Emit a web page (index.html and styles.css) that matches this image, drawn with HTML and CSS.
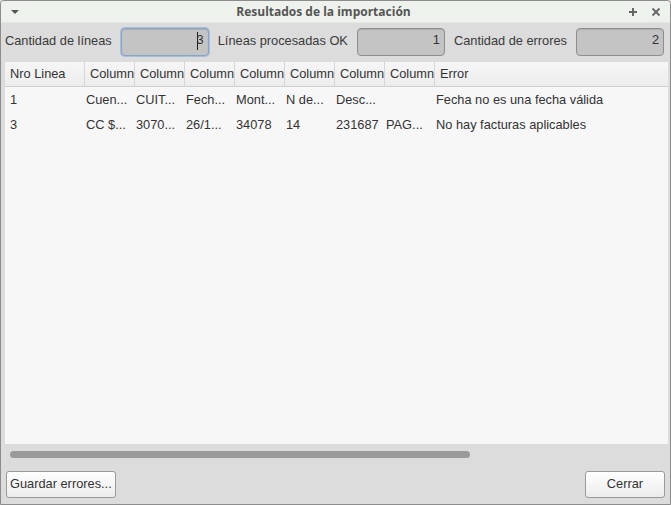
FILE: index.html
```html
<!DOCTYPE html>
<html>
<head>
<meta charset="utf-8">
<link rel="stylesheet" href="styles.css">
</head>
<body>
<div class="window">
  <div class="titlebar">
    <svg class="menu-icon" width="10" height="6" viewBox="0 0 10 6"><path d="M1 1 L9 1 L5 5 Z" fill="#555"/></svg>
    <div class="title">Resultados de la importación</div>
    <div class="tb-buttons">
      <svg width="10" height="10" viewBox="0 0 10 10"><path d="M5 1 V9 M1 5 H9" stroke="#666" stroke-width="2"/></svg>
      <svg width="10" height="10" viewBox="0 0 10 10"><path d="M1.5 1.5 L8.5 8.5 M8.5 1.5 L1.5 8.5" stroke="#666" stroke-width="1.8"/></svg>
    </div>
  </div>
  <div class="content">
    <div class="fields">
      <span class="label first">Cantidad de líneas</span>
      <div class="input focus"><span class="caret"></span>3</div>
      <span class="label">Líneas procesadas OK</span>
      <div class="input">1</div>
      <span class="label">Cantidad de errores</span>
      <div class="input">2</div>
    </div>
    <div class="table">
      <div class="row header">
        <div class="c c0">Nro Linea</div>
        <div class="c c1">Column</div>
        <div class="c c1">Column</div>
        <div class="c c1">Column</div>
        <div class="c c1">Column</div>
        <div class="c c1">Column</div>
        <div class="c c1">Column</div>
        <div class="c c1">Column</div>
        <div class="c cl">Error</div>
      </div>
      <div class="row">
        <div class="c c0">1</div>
        <div class="c c1">Cuen...</div>
        <div class="c c1">CUIT...</div>
        <div class="c c1">Fech...</div>
        <div class="c c1">Mont...</div>
        <div class="c c1">N de...</div>
        <div class="c c1">Desc...</div>
        <div class="c c1"></div>
        <div class="c cl">Fecha no es una fecha válida</div>
      </div>
      <div class="row">
        <div class="c c0">3</div>
        <div class="c c1">CC $...</div>
        <div class="c c1">3070...</div>
        <div class="c c1">26/1...</div>
        <div class="c c1">34078</div>
        <div class="c c1">14</div>
        <div class="c c1">231687</div>
        <div class="c c1">PAG...</div>
        <div class="c cl">No hay facturas aplicables</div>
      </div>
    </div>
    <div class="scroll"><div class="thumb"></div></div>
    <div class="buttons">
      <div class="btn">Guardar errores...</div>
      <div class="btn cerrar">Cerrar</div>
    </div>
  </div>
</div>
</body>
</html>
```
FILE: styles.css
```css
html, body {
  margin: 0;
  padding: 0;
  background: #dcdcdc;
}
.window {
  width: 671px;
  height: 505px;
  box-sizing: border-box;
  border: 1px solid #8c8c8c;
  border-radius: 4px 4px 0 0;
  background: #dcdcdc;
  font-family: "Liberation Sans", Arial, sans-serif;
  font-size: 12.8px;
  color: #3a3a3a;
  display: flex;
  flex-direction: column;
  overflow: hidden;
}
.titlebar {
  height: 22px;
  flex: none;
  background: #eef2ec;
  display: flex;
  align-items: center;
  position: relative;
  border-bottom: 1px solid #e4e6e2;
  box-sizing: border-box;
}
.menu-icon {
  margin-left: 9px;
}
.title {
  position: absolute;
  left: 0;
  right: 24px;
  text-align: center;
  font-family: "Open Sans", sans-serif;
  font-weight: bold;
  font-size: 12px;
  color: #555;
  pointer-events: none;
}
.tb-buttons {
  margin-left: auto;
  margin-right: 9px;
  display: flex;
  gap: 13px;
}
.content {
  flex: 1;
  display: flex;
  flex-direction: column;
  padding: 5px 3px 0 3px;
}
.fields {
  display: flex;
  align-items: center;
  height: 28px;
}
.label {
  margin-right: 9px;
  padding-bottom: 3px;
  white-space: nowrap;
}
.label.first { margin-left: 1px; }
.input {
  width: 88px;
  height: 28px;
  box-sizing: border-box;
  border: 1px solid #8f8f8f;
  border-radius: 4px;
  background: #c4c4c4;
  box-shadow: inset 0 1px 1px rgba(0,0,0,0.12);
  text-align: right;
  line-height: 22px;
  padding-right: 4px;
  margin-right: 9px;
  color: #333;
  position: relative;
}
.input.focus {
  border-color: #8aa3c9;
  box-shadow: 0 0 0 1px #a9bddc, inset 0 1px 1px rgba(0,0,0,0.12);
}
.caret {
  position: absolute;
  right: 10px;
  top: 3px;
  width: 1px;
  height: 18px;
  background: #222;
}
.fields .input:last-child { margin-right: 0; }
.table {
  margin-top: 6px;
  margin-left: 1px;
  width: 663px;
  height: 382px;
  background: #f7f7f7;
  flex: none;
}
.row {
  display: flex;
  height: 25px;
  align-items: center;
}
.row.header {
  height: 25px;
  background: linear-gradient(#f6f6f6, #ececec);
  border-bottom: 1px solid #cfcfcf;
  box-sizing: border-box;
}
.c {
  box-sizing: border-box;
  white-space: nowrap;
  overflow: hidden;
  padding-left: 1px;
  color: #333;
}
.c0 { width: 80px; padding-left: 5px; }
.c1 { width: 50px; }
.cl { flex: 1; }
.header .c {
  height: 100%;
  line-height: 24px;
  border-right: 1px solid #d6d6d6;
}
.header .c0 { padding-left: 5px; }
.header .c1 { padding-left: 5px; }
.header .cl { border-right: none; padding-left: 5px; }
.scroll {
  height: 21px;
  display: flex;
  align-items: center;
  padding-left: 6px;
  flex: none;
}
.thumb {
  width: 460px;
  height: 7px;
  border-radius: 4px;
  background: #9a9a9a;
}
.buttons {
  display: flex;
  justify-content: space-between;
  align-items: center;
  margin-top: 6px;
  padding: 0 2px 0 2px;
}
.btn {
  height: 27px;
  box-sizing: border-box;
  border: 1px solid #9a9a9a;
  border-radius: 3px;
  background: linear-gradient(#ffffff, #ececec);
  line-height: 23px;
  padding: 0 3px 2px;
  color: #333;
}
.cerrar {
  width: 80px;
  text-align: center;
}
```
